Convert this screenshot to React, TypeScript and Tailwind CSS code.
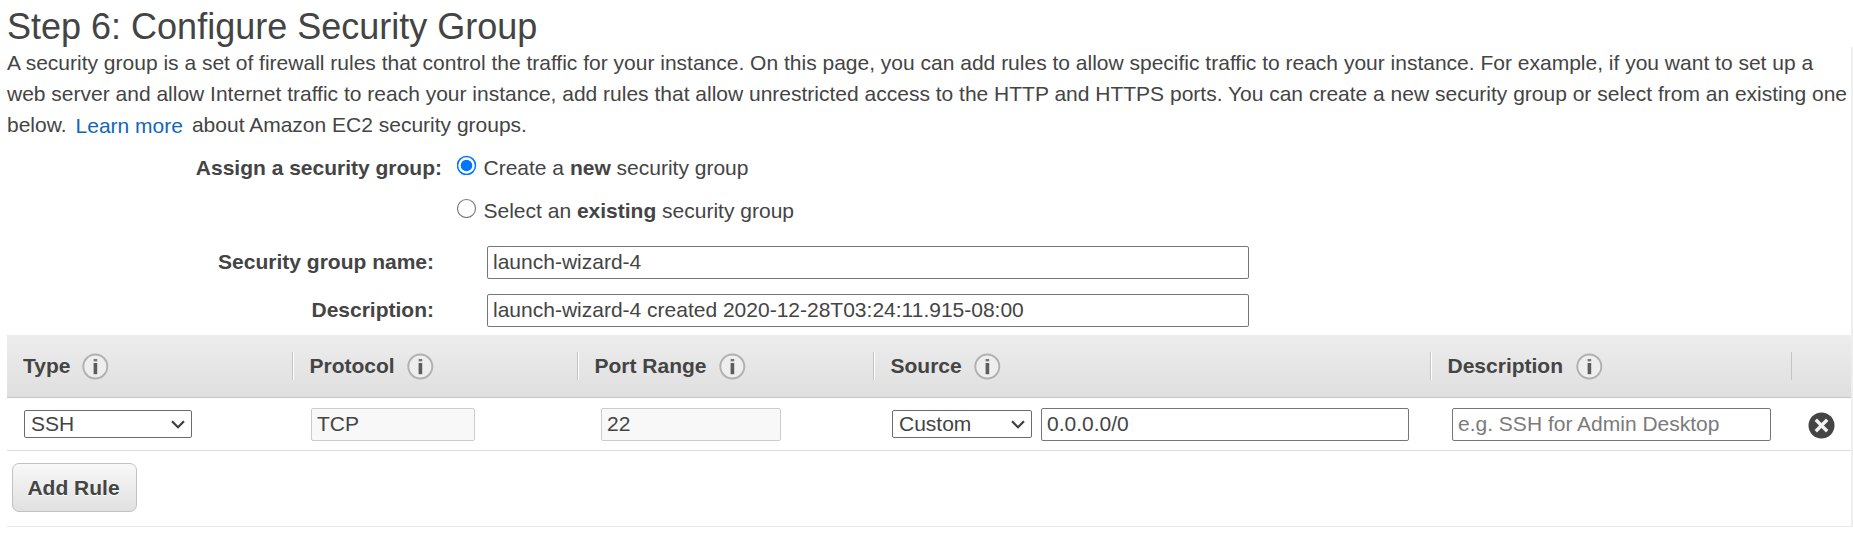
import type { ReactNode } from "react";

function InfoIcon() {
  return (
    <svg width="27" height="27" viewBox="0 0 27 27" className="shrink-0">
      <circle cx="13.3" cy="13.5" r="12" fill="#eeeeee" stroke="#b0b0b0" strokeWidth="1.9" />
      <rect x="11.6" y="6" width="3.6" height="2.4" fill="#777777" />
      <rect x="11.6" y="10" width="3.6" height="11.2" fill="#5c5c5c" />
    </svg>
  );
}

function HeaderCell({ label, width, divider = true }: { label?: string; width: string; divider?: boolean }) {
  return (
    <div className={`flex h-7 items-center ${width} ${divider ? "border-l border-[#c4c4c4]" : ""}`}>
      {divider && label && <span className="h-full w-px bg-white" />}
      {label && (
        <div className={`flex items-center ${divider ? "gap-[12.5px] pl-[15.5px]" : "gap-3 pl-4"}`}>
          <span className="text-[21px] leading-7 font-bold">{label}</span>
          <InfoIcon />
        </div>
      )}
    </div>
  );
}

function Select({ value, width }: { value: string; width: string }) {
  return (
    <div className={`flex h-7 items-center justify-between rounded-[2px] border border-[#6c6c6c] bg-white pr-1.5 pl-1.5 ${width}`}>
      <span className="text-[21px] leading-[26px]">{value}</span>
      <svg width="14" height="9" viewBox="0 0 14 9" fill="none">
        <path d="M1 1.2 7 7.2 13 1.2" stroke="#3c3c3c" strokeWidth="2.1" />
      </svg>
    </div>
  );
}

function Field({ value, placeholder, width, disabled }: { value?: string; placeholder?: string; width: string; disabled?: boolean }) {
  return (
    <input
      defaultValue={value}
      placeholder={placeholder}
      readOnly={disabled}
      className={`h-[33px] shrink-0 rounded-[2px] border px-[5px] text-[21px] leading-7 placeholder:text-[#7b7b7b] ${width} ${
        disabled ? "border-[#cccccc] bg-[#f8f8f8]" : "border-[#767676] bg-white"
      }`}
    />
  );
}

function Radio({ checked, children }: { checked?: boolean; children: ReactNode }) {
  return (
    <div className="flex h-[43px] items-start">
      <svg width="20" height="20" viewBox="0 0 20 20" className="mr-[6.5px]">
        <circle cx="9.5" cy="10.5" r="9" fill="#fff" stroke={checked ? "#0075ff" : "#767676"} strokeWidth={checked ? 1.5 : 1.1} />
        {checked && <circle cx="9.5" cy="10.5" r="5.8" fill="#0075ff" />}
      </svg>
      <span className="pt-px leading-6">{children}</span>
    </div>
  );
}

export default function App() {
  return (
    <div className="flex h-[536px] w-[1853px] overflow-hidden bg-white font-['Liberation_Sans',Arial,sans-serif] text-[21px] text-[#444444]">
      <main className="w-[1851px] pl-[7px]">
        <h1 className="h-[47px] pt-[6px] text-[36px] leading-[41px] whitespace-nowrap">Step 6: Configure Security Group</h1>
        <div className="h-[108px] leading-[31px] whitespace-nowrap">
          <p>A security group is a set of firewall rules that control the traffic for your instance. On this page, you can add rules to allow specific traffic to reach your instance. For example, if you want to set up a</p>
          <p>web server and allow Internet traffic to reach your instance, add rules that allow unrestricted access to the HTTP and HTTPS ports. You can create a new security group or select from an existing one</p>
          <p className="flex">
            <span>below.</span>
            <a className="mr-[9px] ml-[9px] pt-px text-[#1166bb]">Learn more</a>
            <span>about Amazon EC2 security groups.</span>
          </p>
        </div>
        <section className="flex h-[91px]">
          <div className="w-[435px] pt-px text-right leading-6 font-bold">Assign a security group:</div>
          <div className="pl-[15px]">
            <Radio checked>Create a <b>new</b> security group</Radio>
            <Radio>Select an <b>existing</b> security group</Radio>
          </div>
        </section>
        <section className="flex h-[89px] flex-col gap-[15px]">
          <div className="flex">
            <div className="w-[427px] text-right leading-[31px] font-bold">Security group name:</div>
            <div className="flex pl-[53px]"><Field value="launch-wizard-4" width="w-[762px] pb-0.5" /></div>
          </div>
          <div className="flex">
            <div className="w-[427px] text-right leading-[31px] font-bold">Description:</div>
            <div className="flex pl-[53px]"><Field value="launch-wizard-4 created 2020-12-28T03:24:11.915-08:00" width="w-[762px] pb-0.5" /></div>
          </div>
        </section>
        <div className="flex h-[63px] items-center border-b border-[#c6c6c6] bg-linear-to-b from-[#ededed] to-[#dfdfdf]">
          <HeaderCell label="Type" width="w-[285px]" divider={false} />
          <HeaderCell label="Protocol" width="w-[285px]" />
          <HeaderCell label="Port Range" width="w-[296px]" />
          <HeaderCell label="Source" width="w-[557px]" />
          <HeaderCell label="Description" width="w-[361px]" />
          <HeaderCell width="w-[60px]" />
        </div>
        <div className="flex h-[53px] items-center border-b border-[#dddddd] pl-[17px]">
          <Select value="SSH" width="w-[168px]" />
          <div className="ml-[119px] flex"><Field value="TCP" width="w-[164px]" disabled /></div>
          <div className="ml-[126px] flex"><Field value="22" width="w-[180px]" disabled /></div>
          <div className="ml-[111px] flex items-center gap-[9px]">
            <Select value="Custom" width="w-[140px]" />
            <Field value="0.0.0.0/0" width="w-[368px]" />
          </div>
          <div className="ml-[43px] flex"><Field placeholder="e.g. SSH for Admin Desktop" width="w-[319px]" /></div>
          <svg width="27" height="27" viewBox="0 0 27 27" className="mt-[2px] ml-[37px]">
            <circle cx="13.5" cy="13.5" r="13" fill="#444444" />
            <path d="M7.8 7.8 19.2 19.2M19.2 7.8 7.8 19.2" stroke="#f2f2f2" strokeWidth="3.4" />
          </svg>
        </div>
        <div className="flex h-[76px] border-b border-[#e8e8e8] pt-[12px] pl-[5px]">
          <button className="h-[49px] w-[125px] rounded-[7px] border border-[#c2c2c2] bg-linear-to-b from-[#f8f8f8] to-[#e0e0e0] pr-0.5 font-bold [text-shadow:0_1px_0_#fff]">Add Rule</button>
        </div>
      </main>
      <div className="mt-[47px] h-[480px] w-[2px] bg-[#eeeeee]" />
    </div>
  );
}
